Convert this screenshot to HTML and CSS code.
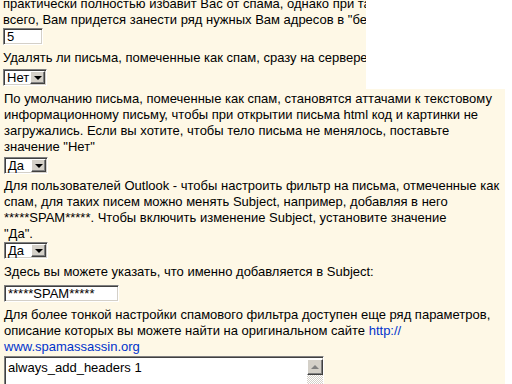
FILE: index.html
```html
<!DOCTYPE html>
<html lang="ru">
<head>
  <meta charset="UTF-8">
  <title>Настройки спам-фильтра</title>
  <link rel="stylesheet" href="styles.css">
</head>
<body>
  <div class="top">
    <p>практически полностью избавит Вас от спама, однако при таких настройках,<br>
    всего, Вам придется занести ряд нужных Вам адресов в "белый список".</p>
    <input class="field num" type="text" value="5">
    <p class="q">Удалять ли письма, помеченные как спам, сразу на сервере</p>
    <div class="combo"><span class="val">Нет</span><span class="btn"><span class="arrow"></span></span></div>
  </div>

  <div class="main">
    <p>По умолчанию письма, помеченные как спам, становятся аттачами к текстовому<br>
    информационному письму, чтобы при открытии письма html код и картинки не<br>
    загружались. Если вы хотите, чтобы тело письма не менялось, поставьте<br>
    значение "Нет"</p>
    <div class="combo combo-a"><span class="val">Да</span><span class="btn"><span class="arrow"></span></span></div>

    <p class="q2">Для пользователей Outlook - чтобы настроить фильтр на письма, отмеченные как<br>
    спам, для таких писем можно менять Subject, например, добавляя в него<br>
    *****SPAM*****. Чтобы включить изменение Subject, установите значение<br>
    "Да".</p>
    <div class="combo combo-b"><span class="val">Да</span><span class="btn"><span class="arrow"></span></span></div>

    <p class="q3">Здесь вы можете указать, что именно добавляется в Subject:</p>
    <input class="field subj" type="text" value="*****SPAM*****">

    <p class="q4">Для более тонкой настройки спамового фильтра доступен еще ряд параметров,<br>
    описание которых вы можете найти на оригинальном сайте <a href="#">http://<br>
    www.spamassassin.org</a></p>

    <div class="memo">
      <div class="memo-text">always_add_headers 1</div>
      <div class="scroll"><span class="btn up"><span class="arrow-up"></span></span></div>
    </div>
  </div>
</body>
</html>
```

FILE: styles.css
```css
body {
  margin: 0;
  font-family: Tahoma, "Liberation Sans", Arial, sans-serif;
  font-size: 13px;
  line-height: 16px;
  color: #000;
  background: #fff;
  overflow: hidden;
}
p {
  margin: 0;
  white-space: nowrap;
}
a {
  color: #0033cc;
  text-decoration: none;
}
.top {
  width: 363px;
  margin-top: -4px;
  padding: 0 0 3px 3px;
  background: #fef8e6;
  overflow: hidden;
}
.main {
  width: 501px;
  padding: 2px 0 0 4px;
  background: #fef8e6;
}
.q {
  margin-top: 5px;
}
.q2 {
  margin-top: 4px;
}
.q3 {
  margin-top: 5px;
}
.q4 {
  margin-top: 5px;
}

/* classic sunken edit box */
.field {
  display: block;
  box-sizing: border-box;
  height: 17px;
  margin: 0;
  padding: 0 0 0 3px;
  font: 13px Tahoma, "Liberation Sans", Arial, sans-serif;
  color: #000;
  background: #fff;
  border: 1px solid;
  border-color: #808080 #fff #fff #808080;
  box-shadow: inset 1px 1px 0 #404040, inset -1px -1px 0 #d4d0c8;
  outline: none;
}
.num {
  width: 40px;
}
.subj {
  width: 115px;
  margin-top: 5px;
}

/* fake combo box */
.combo {
  display: flex;
  box-sizing: border-box;
  width: 44px;
  height: 17px;
  margin-top: 3px;
  background: #fff;
  border: 1px solid;
  border-color: #808080 #fff #fff #808080;
  box-shadow: inset 1px 1px 0 #404040, inset -1px -1px 0 #d4d0c8;
  padding: 1px;
}
.combo-a {
  margin-top: 2px;
}
.combo-b {
  margin-top: 0;
}
.val {
  flex: 1;
  padding-left: 2px;
  line-height: 13px;
}
.btn {
  display: flex;
  align-items: center;
  justify-content: center;
  box-sizing: border-box;
  width: 15px;
  height: 13px;
  background: #d4d0c8;
  border: 1px solid;
  border-color: #fff #404040 #404040 #fff;
  box-shadow: inset -1px -1px 0 #808080;
}
.arrow {
  width: 0;
  height: 0;
  border-left: 4px solid transparent;
  border-right: 4px solid transparent;
  border-top: 4px solid #000;
}
.arrow-up {
  width: 0;
  height: 0;
  border-left: 4px solid transparent;
  border-right: 4px solid transparent;
  border-bottom: 4px solid #808080;
}

/* memo with scrollbar */
.memo {
  display: flex;
  box-sizing: border-box;
  width: 320px;
  height: 60px;
  margin-top: 1px;
  background: #fff;
  border: 1px solid;
  border-color: #808080 #fff #fff #808080;
  box-shadow: inset 1px 1px 0 #404040, inset -1px -1px 0 #d4d0c8;
  padding: 2px 0 0 2px;
}
.memo-text {
  flex: 1;
  padding: 1px 0 0 1px;
}
.scroll {
  width: 16px;
  background: repeating-conic-gradient(#d4d0c8 0 25%, #fff 0 50%) 0 0 / 2px 2px;
}
.btn.up {
  width: 16px;
  height: 16px;
}
```
